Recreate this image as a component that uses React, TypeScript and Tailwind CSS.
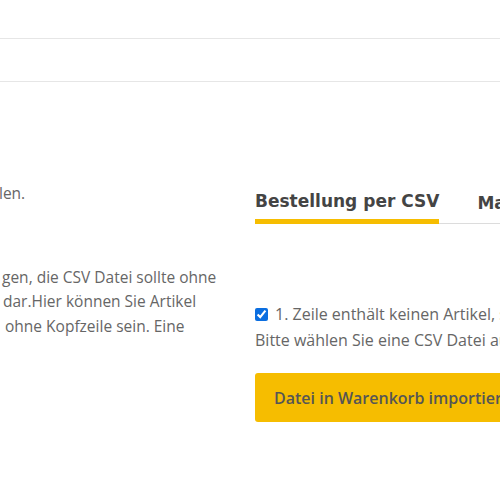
import React from "react";

const body = { fontFamily: '"Open Sans", "Liberation Sans", sans-serif' };
const heading = { fontFamily: '"DejaVu Sans", "Open Sans", sans-serif' };

function App() {
  const [skipFirst, setSkipFirst] = React.useState(true);

  return (
    <div className="w-[500px] h-[500px] overflow-hidden bg-white" style={body}>
      <div className="h-[39px] border-b border-[#e6e6e6]" />
      <div className="h-[43px] border-b border-[#e6e6e6]" />

      <div className="flex pt-[100px]">
        <div className="w-[255px] shrink-0 text-[15.5px] leading-[24.5px] text-[#666] whitespace-nowrap">
          <p className="-mt-[1px] -ml-[1px]">len.</p>
          <div className="mt-[59px]">
            <p className="pl-[2px]">gen, die CSV Datei sollte ohne</p>
            <p className="pl-[3px]">dar.Hier können Sie Artikel</p>
            <p className="pl-[1px]">&nbsp;ohne Kopfzeile sein. Eine</p>
          </div>
        </div>

        <div className="flex-1 min-w-0">
          <div className="flex gap-[38px] border-b border-[#dcdcdc] whitespace-nowrap">
            <button
              className="pb-[6px] border-b-[5px] border-[#f6bd00] -mb-[1px] text-[17px] font-semibold text-[#444] leading-[24px] pt-[7px]"
              style={heading}
            >
              Bestellung per CSV
            </button>
            <button
              className="pb-[6px] text-[17px] font-semibold text-[#444] leading-[24px] pt-[7px]"
              style={heading}
            >
              Manuelle Eingabe
            </button>
          </div>

          <div className="mt-[78px] text-[16px] text-[#666] whitespace-nowrap">
            <label className="flex items-center gap-[7px] leading-[24px]">
              <input
                type="checkbox"
                checked={skipFirst}
                onChange={(e) => setSkipFirst(e.target.checked)}
                className="w-[13px] h-[13px] accent-[#0b6ee0] m-0 shrink-0"
              />
              <span>1. Zeile enthält keinen Artikel, sondern Spaltenüberschriften</span>
            </label>
            <p className="leading-[24px] mt-[2px]">Bitte wählen Sie eine CSV Datei aus</p>

            <button className="mt-[21px] h-[49px] w-[300px] rounded-[3px] bg-[#f6bd00] px-[19px] text-left text-[16px] font-semibold text-[#555]">
              Datei in Warenkorb importieren
            </button>
          </div>
        </div>
      </div>
    </div>
  );
}

export default App;
